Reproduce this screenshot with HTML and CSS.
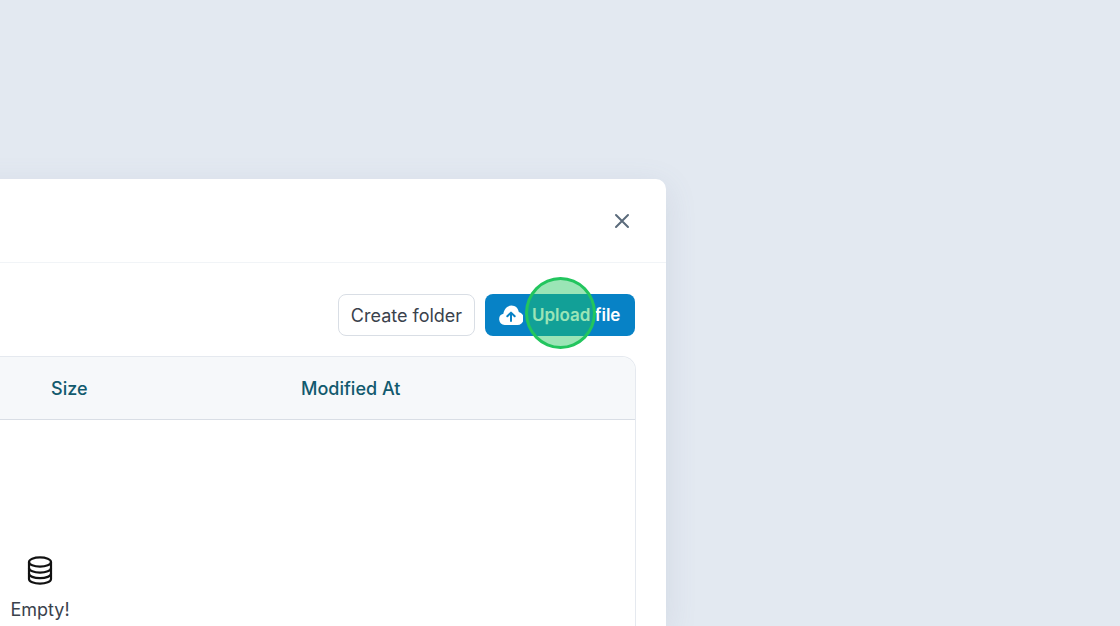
FILE: index.html
```html
<!DOCTYPE html>
<html lang="en">
<head>
    <meta charset="UTF-8">
    <title>Files</title>
    <link rel="stylesheet" href="styles.css">
</head>
<body>
    <div class="modal">
        <div class="modal-header">
            <button class="close-btn" type="button" aria-label="Close">
                <svg width="16" height="16" viewBox="0 0 16 16" fill="none" stroke="#5b6b7b" stroke-width="2" stroke-linecap="round">
                    <path d="M2 2l12 12M14 2L2 14"/>
                </svg>
            </button>
        </div>
        <div class="modal-body">
            <div class="toolbar">
                <button class="btn btn-outline" type="button">Create folder</button>
                <button class="btn btn-primary" type="button">
                    <svg width="24" height="20" viewBox="0 0 24 20">
                        <path fill="#fff" d="M6 20a5.700 5.700 0 0 1-1.600-11.200C5 4 8.400 0.500 12.500 0.500c3.800 0 6.800 2.800 7.300 6.500A6.600 6.600 0 0 1 18 20z"/>
                        <path fill="none" stroke="#0782c6" stroke-width="2" stroke-linecap="round" stroke-linejoin="round" d="M12 16V7.800M8.300 11.300L12 7.600l3.700 3.700"/>
                    </svg>
                    Upload file
                </button>
            </div>
            <div class="file-table">
                <div class="table-head">
                    <div class="col-name">Name</div>
                    <div class="col-size">Size</div>
                    <div class="col-date">Modified At</div>
                </div>
                <div class="table-empty">
                    <svg width="26" height="29" viewBox="0 0 26 29" fill="none" stroke="#111" stroke-width="2.2">
                        <ellipse cx="13" cy="6" rx="11" ry="4.600"/>
                        <path d="M2 6v17c0 2.600 5 4.600 11 4.600s11-2 11-4.600V6"/>
                        <path d="M2 12c0 2.600 5 4.600 11 4.600s11-2 11-4.600M2 17.600c0 2.600 5 4.600 11 4.600s11-2 11-4.600"/>
                    </svg>
                    <span>Empty!</span>
                </div>
            </div>
        </div>
    </div>
    <div class="click-marker"></div>
</body>
</html>
```

FILE: styles.css
```css
html, body {
    height: 100%;
}

body {
    margin: 0;
    overflow: hidden;
    background-color: #e3e9f1;
    font-family: "Inter", "Noto Sans", sans-serif;
}

.modal {
    width: 1252px;
    height: 447px;
    margin: 179px 0 0 -586px;
    background-color: white;
    border-radius: 10px 10px 0 0;
    box-shadow: 0 8px 32px rgba(100, 116, 150, 0.14);
}

.modal-header {
    display: flex;
    justify-content: flex-end;
    align-items: center;
    height: 83px;
    padding: 0 36px 0 0;
    border-bottom: 1px solid #f1f4f7;
}

.close-btn {
    display: flex;
    padding: 0;
    border: none;
    background: none;
}

.modal-body {
    padding: 31px 30px 0;
}

.toolbar {
    display: flex;
    justify-content: flex-end;
    gap: 10px;
    padding-right: 1px;
    margin-bottom: 20px;
}

.btn {
    display: flex;
    align-items: center;
    height: 42px;
    box-sizing: border-box;
    border-radius: 8px;
    font-family: inherit;
}

.btn-outline {
    width: 137px;
    justify-content: center;
    padding: 0;
    border: 1.5px solid #d9dee5;
    background-color: white;
    color: #3a424c;
    font-size: 18px;
}

.btn-primary {
    gap: 9px;
    width: 150px;
    padding: 0 0 0 14px;
    border: none;
    background-color: #0782c6;
    color: white;
    font-size: 17px;
    font-weight: 600;
}

.file-table {
    height: 300px;
    border: 1px solid #e5e9ef;
    border-bottom: none;
    border-radius: 14px 14px 0 0;
    overflow: hidden;
}

.table-head {
    display: grid;
    grid-template-columns: 606px 250px 1fr;
    align-items: center;
    height: 62px;
    background-color: #f6f8fa;
    border-bottom: 1px solid #d9dee5;
    color: #125a6e;
    font-size: 18px;
    font-weight: 500;
}

.col-name {
    visibility: hidden;
}

.table-empty {
    display: flex;
    flex-direction: column;
    align-items: center;
    gap: 14px;
    padding-top: 136px;
    color: #3a424c;
    font-size: 18px;
}

.click-marker {
    position: absolute;
    left: 525px;
    top: 277px;
    width: 65px;
    height: 66px;
    border: 3px solid #22c55e;
    border-radius: 50%;
    background-color: rgba(34, 197, 94, 0.45);
}
```
